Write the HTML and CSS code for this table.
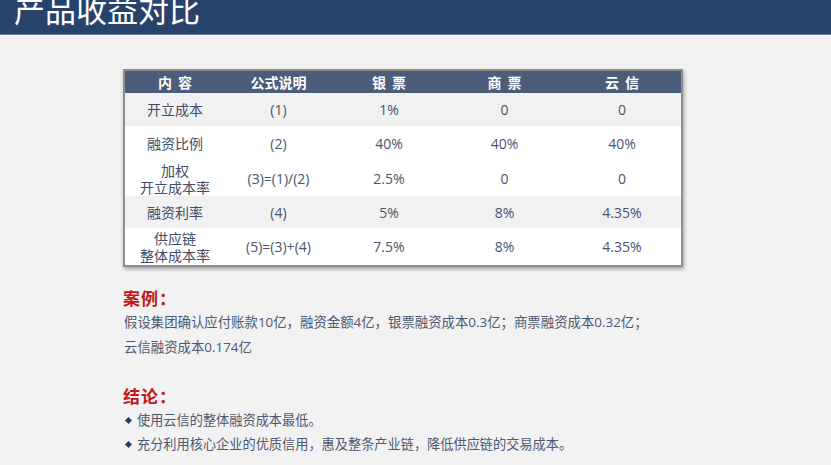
FILE: index.html
```html
<!DOCTYPE html>
<html lang="zh-CN">
<head>
<meta charset="utf-8">
<title>产品收益对比</title>
<link rel="stylesheet" href="styles.css">
</head>
<body>
<header class="topbar">
  <h1 class="title">产品收益对比</h1>
</header>
<main class="content">
  <div class="table-wrap">
    <table class="compare">
      <colgroup>
        <col class="c1"><col class="c2"><col class="c3"><col class="c4"><col class="c5">
      </colgroup>
      <thead>
        <tr>
          <th class="spaced">内容</th>
          <th>公式说明</th>
          <th class="spaced">银票</th>
          <th class="spaced">商票</th>
          <th class="spaced">云信</th>
        </tr>
      </thead>
      <tbody>
        <tr class="r1 alt"><td class="label">开立成本</td><td>(1)</td><td>1%</td><td>0</td><td>0</td></tr>
        <tr class="r2"><td class="label">融资比例</td><td>(2)</td><td>40%</td><td>40%</td><td>40%</td></tr>
        <tr class="r3"><td class="label">加权<br>开立成本率</td><td>(3)=(1)/(2)</td><td>2.5%</td><td>0</td><td>0</td></tr>
        <tr class="r4 alt"><td class="label">融资利率</td><td>(4)</td><td>5%</td><td>8%</td><td>4.35%</td></tr>
        <tr class="r5"><td class="label">供应链<br>整体成本率</td><td>(5)=(3)+(4)</td><td>7.5%</td><td>8%</td><td>4.35%</td></tr>
      </tbody>
    </table>
  </div>

  <section class="case">
    <h2 class="sec-title">案例：</h2>
    <p class="para">假设集团确认应付账款10亿，融资金额4亿，银票融资成本0.3亿；商票融资成本0.32亿；<br>云信融资成本0.174亿</p>
  </section>

  <section class="conclusion">
    <h2 class="sec-title">结论：</h2>
    <ul class="bullets">
      <li>使用云信的整体融资成本最低。</li>
      <li>充分利用核心企业的优质信用，惠及整条产业链，降低供应链的交易成本。</li>
    </ul>
  </section>
</main>
</body>
</html>
```

FILE: styles.css
```css
html, body {
  margin: 0;
  padding: 0;
}
body {
  background: #f2f2f2;
  font-family: "Open Sans", "Noto Sans CJK SC", sans-serif;
  width: 831px;
  height: 465px;
  overflow: hidden;
}
.topbar {
  height: 34px;
  background: #27436c;
  border-bottom: 1px solid #6b7e9b;
  overflow: hidden;
}
.title {
  margin: 0;
  padding-left: 14px;
  font-family: "Noto Sans CJK SC", sans-serif;
  font-weight: 400;
  font-size: 31px;
  line-height: 17px;
  color: #ffffff;
}
.content {
  padding: 34px 0 0 123px;
}
.table-wrap {
  width: 556px;
  border: 2px solid #8e8e8e;
  box-shadow: 1px 2px 4px rgba(0, 0, 0, 0.35);
  background: #ffffff;
}
.compare {
  width: 556px;
  border-collapse: collapse;
  table-layout: fixed;
  font-size: 14px;
  color: #4a546c;
}
.c1 { width: 100px; }
.c2 { width: 107px; }
.c3 { width: 114px; }
.c4 { width: 117px; }
.c5 { width: 118px; }
.compare th {
  height: 22px;
  padding: 0;
  background: #4a5d7b;
  color: #ffffff;
  font-family: "Noto Sans CJK SC", sans-serif;
  font-weight: 700;
  font-size: 14px;
  line-height: 22px;
  text-align: center;
}
.compare th.spaced {
  letter-spacing: 6px;
  text-indent: 6px;
}
.compare td {
  padding: 0;
  text-align: center;
  line-height: 17px;
  background: #ffffff;
}
.compare tr.alt td {
  background: #f1f1f1;
}
.compare td.label {
  font-family: "Noto Sans CJK SC", sans-serif;
  font-size: 14px;
  color: #424d69;
}
.r1 td { height: 33px; }
.r2 td { height: 35px; }
.r3 td { height: 35px; }
.r4 td { height: 32px; }
.r5 td { height: 37px; }

.case {
  margin-top: 20px;
}
.sec-title {
  margin: 0;
  font-family: "Noto Sans CJK SC", sans-serif;
  font-size: 17px;
  font-weight: 700;
  line-height: 22px;
  letter-spacing: 1px;
  color: #c4161c;
}
.para {
  margin: 1px 0 0 1px;
  font-size: 13.4px;
  line-height: 25px;
  color: #4e586f;
}
.conclusion {
  margin-top: 25px;
}
.bullets {
  list-style: none;
  margin: 1px 0 0;
  padding: 0;
  font-size: 13.2px;
  line-height: 24px;
  color: #4e586f;
}
.bullets li {
  display: flex;
  align-items: center;
  gap: 6px;
}
.bullets li::before {
  content: "";
  width: 5px;
  height: 5px;
  margin-left: 3px;
  background: #2a3d6c;
  transform: rotate(45deg);
  flex: none;
}
```
